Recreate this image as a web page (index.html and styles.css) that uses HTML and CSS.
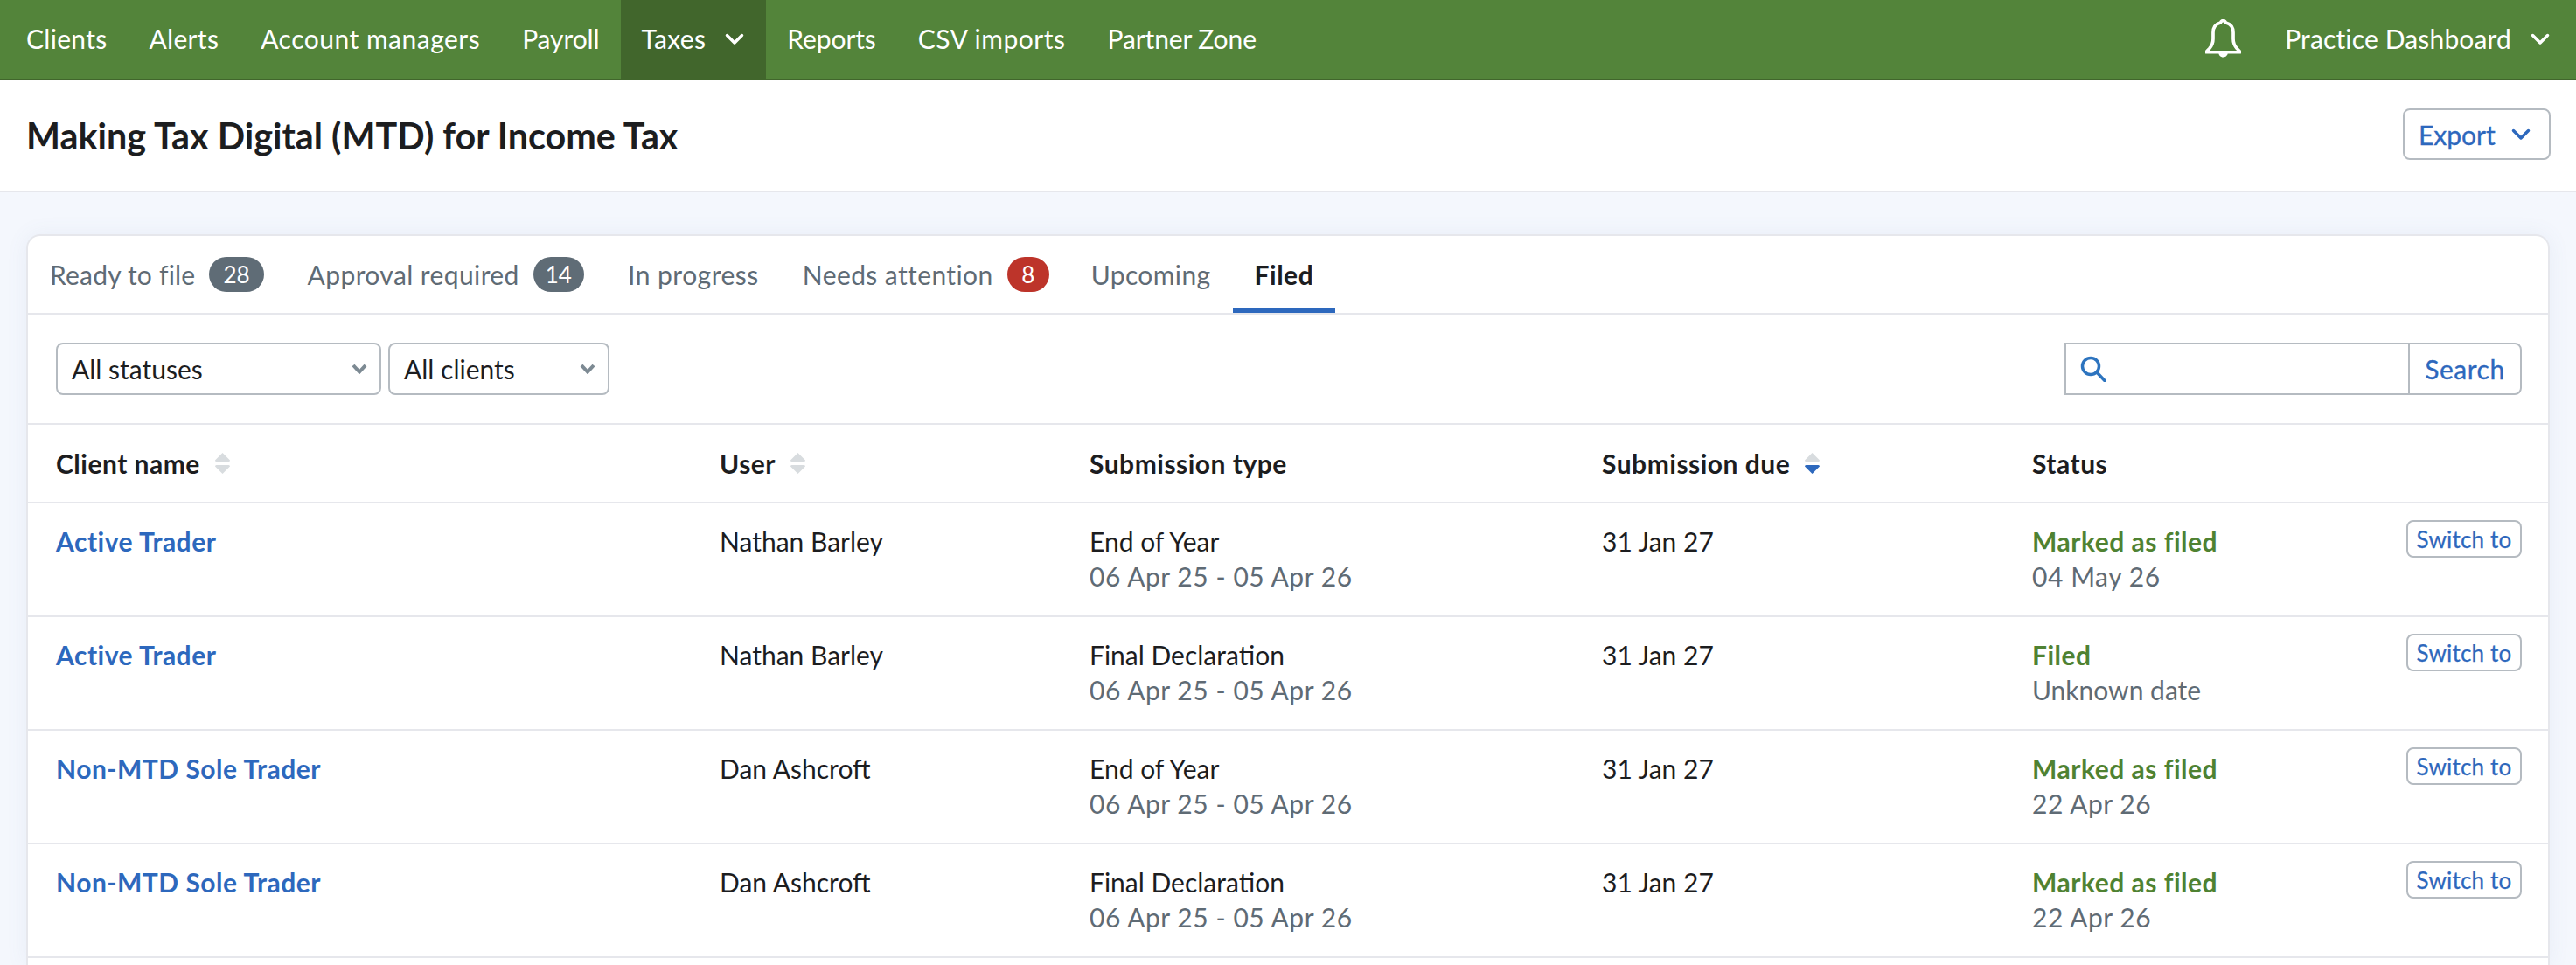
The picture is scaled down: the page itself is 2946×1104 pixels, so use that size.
FILE: index.html
```html
<!DOCTYPE html>
<html lang="en">
<head>
<meta charset="utf-8">
<title>Making Tax Digital (MTD) for Income Tax</title>
<link rel="stylesheet" href="styles.css">
</head>
<body>
<header class="topbar">
  <nav class="nav">
    <a class="nav-item">Clients</a>
    <a class="nav-item">Alerts</a>
    <a class="nav-item nav-wide">Account managers</a>
    <a class="nav-item nav-tight">Payroll</a>
    <a class="nav-item nav-active">Taxes
      <svg class="chev-nav" viewBox="0 0 22 14"><path d="M2.500 2.500 11 11l8.500-8.500"/></svg>
    </a>
    <a class="nav-item nav-tight">Reports</a>
    <a class="nav-item nav-wide">CSV imports</a>
    <a class="nav-item nav-tight">Partner Zone</a>
  </nav>
  <div class="nav-right">
    <svg class="bell" viewBox="1 2 39 42"><path d="M20.500 3.500c-1.800 0-2.500 1.200-3 2.300C12 7.300 9.500 11 9.500 16.500v7c0 5-1.800 8-4 10.500-1.500 1.500-2.800 2.500-3.500 4h37c-.7-1.500-2-2.500-3.500-4-2.200-2.500-4-5.500-4-10.500v-7c0-5.500-2.500-9.200-8-10.700-.5-1.100-1.200-2.300-3-2.300Z"/><path class="bell-fill" d="M15.500 38.500h10c0 3-2.200 5-5 5s-5-2-5-5Z"/></svg>
    <a class="nav-item nav-practice">Practice Dashboard
      <svg class="chev-nav" viewBox="0 0 22 14"><path d="M2.500 2.500 11 11l8.500-8.500"/></svg>
    </a>
  </div>
</header>

<section class="titlebar">
  <h1 class="page-title">Making Tax Digital (MTD) for Income Tax</h1>
  <button class="export">Export
    <svg class="chev-blue" viewBox="0 0 22 14"><path d="M2.500 2.500 11 11l8.500-8.500"/></svg>
  </button>
</section>

<main class="content">
  <div class="card">
    <div class="tabs">
      <a class="tab tab-narrow">Ready to file <span class="badge badge-wide">28</span></a>
      <a class="tab">Approval required <span class="badge">14</span></a>
      <a class="tab tab-wide">In progress</a>
      <a class="tab">Needs attention <span class="badge badge-red">8</span></a>
      <a class="tab">Upcoming</a>
      <a class="tab tab-active">Filed</a>
    </div>

    <div class="filters">
      <div class="filter-group">
        <div class="select select-status">All statuses
          <svg class="chev-grey" viewBox="0 0 18 12"><path d="M2 2l7 7.500L16 2"/></svg>
        </div>
        <div class="select select-client">All clients
          <svg class="chev-grey" viewBox="0 0 18 12"><path d="M2 2l7 7.500L16 2"/></svg>
        </div>
      </div>
      <div class="search">
        <div class="search-field">
          <svg class="search-icon" viewBox="0 0 30 30"><circle cx="12" cy="12" r="9.500"/><path d="M19 19l9 9.500"/></svg>
          <input class="search-input" type="text">
        </div>
        <button class="search-btn">Search</button>
      </div>
    </div>

    <div class="row row-head">
      <div class="head-cell">Client name
        <svg class="sort" viewBox="0 0 17 24"><path class="sort-off" d="M8.500 0 17 8.500a1.500 1.500 0 0 1-1.500 1.500h-14A1.500 1.500 0 0 1 0 8.500Z"/><path class="sort-off" d="M8.500 24 17 15.500a1.500 1.500 0 0 0-1.500-1.500h-14A1.500 1.500 0 0 0 0 15.500Z"/></svg>
      </div>
      <div class="head-cell">User
        <svg class="sort" viewBox="0 0 17 24"><path class="sort-off" d="M8.500 0 17 8.500a1.500 1.500 0 0 1-1.500 1.500h-14A1.500 1.500 0 0 1 0 8.500Z"/><path class="sort-off" d="M8.500 24 17 15.500a1.500 1.500 0 0 0-1.500-1.500h-14A1.500 1.500 0 0 0 0 15.500Z"/></svg>
      </div>
      <div class="head-cell">Submission type</div>
      <div class="head-cell">Submission due
        <svg class="sort" viewBox="0 0 17 24"><path class="sort-off" d="M8.500 0 17 8.500a1.500 1.500 0 0 1-1.500 1.500h-14A1.500 1.500 0 0 1 0 8.500Z"/><path class="sort-on" d="M8.500 24 17 15.500a1.500 1.500 0 0 0-1.500-1.500h-14A1.500 1.500 0 0 0 0 15.500Z"/></svg>
      </div>
      <div class="head-cell">Status</div>
    </div>

    <div class="row">
      <a class="client">Active Trader</a>
      <div>Nathan Barley</div>
      <div>End of Year<div class="muted date">06 Apr 25 - 05 Apr 26</div></div>
      <div>31 Jan 27</div>
      <div class="status-cell">
        <div><div class="status">Marked as filed</div><div class="muted date">04 May 26</div></div>
        <button class="switch">Switch to</button>
      </div>
    </div>

    <div class="row">
      <a class="client">Active Trader</a>
      <div>Nathan Barley</div>
      <div>Final Declaration<div class="muted date">06 Apr 25 - 05 Apr 26</div></div>
      <div>31 Jan 27</div>
      <div class="status-cell">
        <div><div class="status">Filed</div><div class="muted">Unknown date</div></div>
        <button class="switch">Switch to</button>
      </div>
    </div>

    <div class="row">
      <a class="client">Non-MTD Sole Trader</a>
      <div>Dan Ashcroft</div>
      <div>End of Year<div class="muted date">06 Apr 25 - 05 Apr 26</div></div>
      <div>31 Jan 27</div>
      <div class="status-cell">
        <div><div class="status">Marked as filed</div><div class="muted date">22 Apr 26</div></div>
        <button class="switch">Switch to</button>
      </div>
    </div>

    <div class="row">
      <a class="client">Non-MTD Sole Trader</a>
      <div>Dan Ashcroft</div>
      <div>Final Declaration<div class="muted date">06 Apr 25 - 05 Apr 26</div></div>
      <div>31 Jan 27</div>
      <div class="status-cell">
        <div><div class="status">Marked as filed</div><div class="muted date">22 Apr 26</div></div>
        <button class="switch">Switch to</button>
      </div>
    </div>
  </div>
</main>
</body>
</html>
```

FILE: styles.css
```css
* { box-sizing: border-box; }
html, body { margin: 0; height: 100%; overflow: hidden; }
body {
  background: #f4f7fd;
  color: #1c1d1f;
  font-family: "Lato", "Liberation Sans", sans-serif;
  font-size: 30px;
  line-height: 40px;
}
button { font: inherit; background: #fff; cursor: pointer; }

.topbar {
  height: 92px;
  background: #53843a;
  border-bottom: 2px solid #41662c;
  display: flex;
  justify-content: space-between;
  color: #fff;
}
.nav { display: flex; padding-left: 6px; }
.nav-item {
  display: flex;
  align-items: center;
  padding: 0 24px 3px;
  height: 90px;
  letter-spacing: .3px;
}
.nav-wide { letter-spacing: .5px; }
.nav-tight { letter-spacing: -.1px; }
.nav-active { background: #41662c; padding-right: 25px; }
.chev-nav { width: 22px; height: 14px; margin-left: 22px; margin-top: 2px; }
.chev-nav path, .chev-blue path {
  fill: none;
  stroke: #fff;
  stroke-width: 3.500;
  stroke-linecap: round;
  stroke-linejoin: round;
}
.chev-blue path { stroke: #2d68bd; }
.nav-right { display: flex; align-items: center; padding-right: 6px; }
.nav-practice { padding-right: 24px; padding-left: 50px; letter-spacing: .15px; }
.bell { width: 41px; height: 44px; margin-top: -2px; }
.bell path { fill: none; stroke: #fff; stroke-width: 3.500; stroke-linejoin: round; }
.bell .bell-fill { fill: #fff; stroke: none; }

.titlebar {
  height: 128px;
  background: #fff;
  border-bottom: 2px solid #e6e7ec;
  padding: 0 29px 0 30px;
  display: flex;
  align-items: center;
  justify-content: space-between;
}
.page-title { margin: 0; font-size: 41.300px; font-weight: 700; line-height: 50px; }
.export {
  height: 59px;
  width: 169px;
  border: 2px solid #b5bbc1;
  border-radius: 8px;
  color: #2d68bd;
  -webkit-text-stroke: .3px #2d68bd;
  display: flex;
  align-items: center;
  padding: 0 0 0 16px;
  margin-top: -3px;
}
.chev-blue { width: 22px; height: 14px; margin-left: 18px; }

.content { padding: 48px 30px 0; }
.card {
  background: #fff;
  border: 2px solid #e6e7ec;
  border-bottom: 0;
  border-radius: 16px 16px 0 0;
  box-shadow: 0 0 24px rgba(90, 110, 170, .08);
  height: 836px;
}
.tabs {
  display: flex;
  height: 90px;
  border-bottom: 2px solid #e6e7ec;
}
.tab {
  display: flex;
  align-items: center;
  gap: 16px;
  height: 88px;
  padding: 0 25px;
  color: #5f6b75;
  letter-spacing: .4px;
}
.tab-narrow { letter-spacing: .2px; }
.tab-wide { letter-spacing: .5px; }
.tab-active {
  color: #1c1d1f;
  font-weight: 700;
  letter-spacing: .5px;
  box-shadow: inset 0 -6px 0 #2d68bd;
}
.badge {
  height: 40px;
  min-width: 48px;
  padding: 0 14px;
  border-radius: 20px;
  background: #5f6c76;
  color: #fff;
  font-size: 26px;
  line-height: 40px;
  text-align: center;
  letter-spacing: 0;
}
.badge-wide { padding: 0 16px; }
.badge-red { background: #bd342a; margin-right: -2px; }

.filters {
  display: flex;
  justify-content: space-between;
  align-items: center;
  height: 126px;
  padding: 0 30px 0 32px;
  border-bottom: 2px solid #e6e7ec;
}
.filter-group { display: flex; gap: 8px; }
.select {
  height: 60px;
  border: 2px solid #b5bbc1;
  border-radius: 8px;
  display: flex;
  align-items: center;
  justify-content: space-between;
  padding: 0 14px 0 16px;
}
.select-status { width: 372px; }
.select-client { width: 253px; }
.chev-grey { width: 18px; height: 12px; }
.chev-grey path { fill: none; stroke: #7d8a93; stroke-width: 4; }

.search { display: flex; width: 523px; height: 60px; }
.search-field {
  flex: 1;
  min-width: 0;
  border: 2px solid #b5bbc1;
  border-right: 0;
  display: flex;
  align-items: center;
  padding-left: 16px;
}
.search-input { flex: 1; width: 0; min-width: 0; border: 0; outline: 0; background: none; font: inherit; }
.search-icon { width: 30px; height: 30px; flex: none; }
.search-icon circle, .search-icon path { fill: none; stroke: #2d74bf; stroke-width: 3.500; stroke-linecap: round; }
.search-btn {
  flex: none;
  width: 130px;
  border: 2px solid #b5bbc1;
  border-radius: 0 8px 8px 0;
  color: #2d68bd;
  letter-spacing: .5px;
  -webkit-text-stroke: .3px #2d68bd;
  padding: 0;
}

.row {
  display: grid;
  grid-template-columns: 759px 423px 586px 492px 1fr;
  height: 130px;
  padding: 23px 30px 0 32px;
  border-bottom: 2px solid #e6e7ec;
}
.row-head { height: 90px; align-items: center; padding-top: 0; font-weight: 700; letter-spacing: .5px; }
.head-cell { display: flex; align-items: center; gap: 17px; }
.sort { width: 17px; height: 24px; }
.sort-off { fill: #d8dcdf; }
.sort-on { fill: #2d68bd; }
.client { color: #2d68bd; font-weight: 700; letter-spacing: .5px; }
.muted { color: #5f6b75; }
.date { letter-spacing: .55px; }
.status { color: #4f8232; font-weight: 700; letter-spacing: .5px; }
.status-cell { display: flex; justify-content: space-between; align-items: flex-start; }
.switch {
  height: 43px;
  width: 132px;
  margin-top: -4px;
  padding: 0;
  border: 2px solid #b5bbc1;
  border-radius: 8px;
  color: #2d68bd;
  font-size: 26px;
  line-height: 36px;
  letter-spacing: .2px;
  -webkit-text-stroke: .25px #2d68bd;
}
```
